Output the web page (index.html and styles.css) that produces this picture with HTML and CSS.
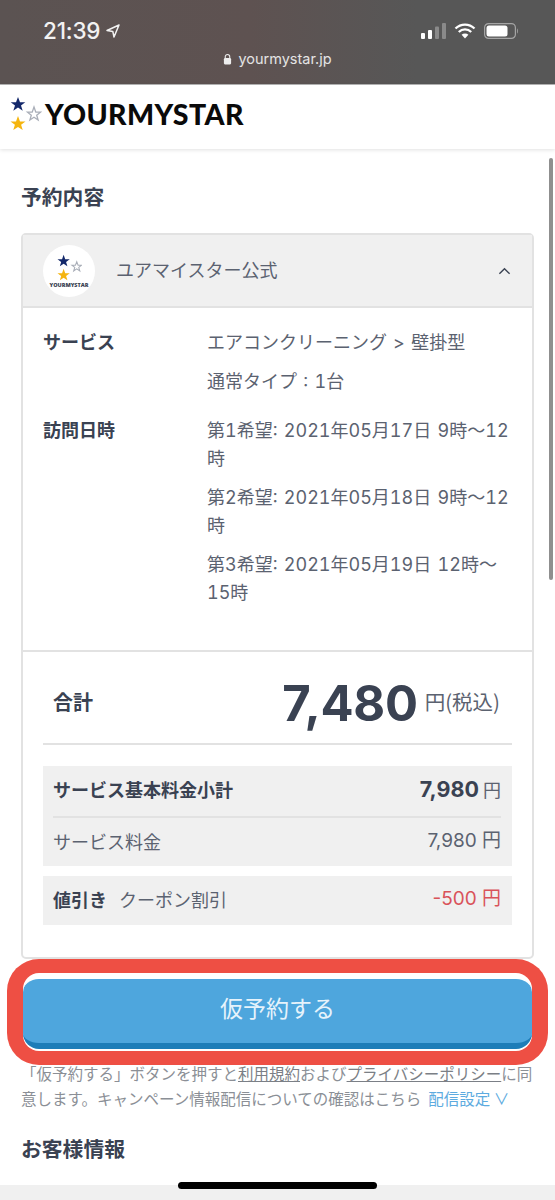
FILE: index.html
```html
<!DOCTYPE html>
<html lang="ja">
<head>
<meta charset="utf-8">
<title>YOURMYSTAR</title>
<link rel="stylesheet" href="styles.css">
</head>
<body>
<div class="phone">
  <header class="chrome">
    <div class="status">
      <div class="clock"><span>21:39</span>
        <svg class="loc" viewBox="0 0 14 14"><path d="M13 1 1 6.500l5.800.9L8 13z" fill="none" stroke="#f2f2f2" stroke-width="1.500" stroke-linejoin="round"/></svg>
      </div>
      <div class="indicators">
        <svg class="signal" viewBox="0 0 25 16"><rect x="0" y="10" width="4" height="6" rx="1" fill="#fff"/><rect x="7" y="7" width="4" height="9" rx="1" fill="#fff"/><rect x="14" y="3.500" width="4" height="12.500" rx="1" fill="#8a8a8a"/><rect x="21" y="0" width="4" height="16" rx="1" fill="#8a8a8a"/></svg>
        <svg class="wifi" viewBox="0 0 22 16"><path d="M1.500 5.500a13.500 13.500 0 0 1 19 0M4.800 9a8.800 8.800 0 0 1 12.400 0" fill="none" stroke="#fff" stroke-width="2.300"/><path d="M7.600 11.800a4.800 4.800 0 0 1 6.800 0L11 15.500z" fill="#fff"/></svg>
        <svg class="battery" viewBox="0 0 35 16"><rect x=".6" y=".6" width="30.800" height="14.800" rx="4" fill="none" stroke="#a5a5a5" stroke-width="1.200"/><rect x="2.500" y="2.500" width="21" height="11" rx="2.500" fill="#fff"/><path d="M33 5.500c1.200.4 1.200 4.600 0 5z" fill="#a5a5a5"/></svg>
      </div>
    </div>
    <div class="address">
      <svg class="lock" viewBox="0 0 10 12"><path d="M2.500 5V3.500a2.500 2.500 0 0 1 5 0V5" fill="none" stroke="#eee" stroke-width="1.200"/><rect x="1" y="5" width="8" height="7" rx="1.200" fill="#eee"/></svg>
      <span>yourmystar.jp</span>
    </div>
  </header>

  <nav class="brandbar">
    <svg class="stars" viewBox="0 0 32 36">
      <polygon points="8,1 10,6.200 15.300,6.200 11,9.500 12.700,14.800 8,11.500 3.300,14.800 5,9.500 .7,6.200 6,6.200" fill="#14296b"/>
      <polygon points="24,11 25.800,16.200 30.500,16.200 26.700,19.300 28.100,24 24,21.200 19.900,24 21.300,19.300 17.500,16.200 22.200,16.200" fill="none" stroke="#a9aeb8" stroke-width="1.300"/>
      <polygon points="8,20 10,25.500 15.500,25.500 11.100,28.800 12.700,34 8,30.900 3.300,34 4.900,28.800 .5,25.500 6,25.500" fill="#f5b50f"/>
    </svg>
    <span class="wordmark">YOURMYSTAR</span>
  </nav>

  <main class="content">
    <div class="scrollthumb"></div>
    <h2 class="section-title">予約内容</h2>

    <section class="card">
      <div class="card-head">
        <div class="avatar">
          <svg class="avatar-stars" viewBox="0 0 32 32">
            <polygon points="11,2 12.800,7 18,7 13.800,10.200 15.300,15.200 11,12.200 6.700,15.200 8.200,10.200 4,7 9.200,7" fill="#14296b"/>
            <polygon points="26,10 27.500,14 31.500,14 28.300,16.500 29.500,20.500 26,18.100 22.500,20.500 23.700,16.500 20.500,14 24.500,14" fill="none" stroke="#a9aeb8" stroke-width="1.200"/>
            <polygon points="11,18 12.800,23 18,23 13.800,26.200 15.300,31.200 11,28.200 6.700,31.200 8.200,26.200 4,23 9.200,23" fill="#f5b50f"/>
          </svg>
          <span class="avatar-name">YOURMYSTAR</span>
        </div>
        <span class="shop-name">ユアマイスター公式</span>
        <svg class="chevron" viewBox="0 0 14 8"><path d="M1.500 7 7 1.500 12.500 7" fill="none" stroke="#3a4252" stroke-width="1.500"/></svg>
      </div>

      <div class="details">
        <div class="detail-row">
          <div class="detail-label">サービス</div>
          <div class="detail-value">
            <p>エアコンクリーニング &gt; 壁掛型</p>
            <p>通常タイプ : 1台</p>
          </div>
        </div>
        <div class="detail-row">
          <div class="detail-label">訪問日時</div>
          <div class="detail-value">
            <p>第1希望: 2021年05月17日 9時〜12時</p>
            <p>第2希望: 2021年05月18日 9時〜12時</p>
            <p>第3希望: 2021年05月19日 12時〜15時</p>
          </div>
        </div>
      </div>

      <div class="pricing">
        <div class="total">
          <span class="total-label">合計</span>
          <span class="total-value"><b>7,480</b><span>円(税込)</span></span>
        </div>
        <div class="price-box">
          <div class="price-row strong"><span>サービス基本料金小計</span><span><b>7,980</b> <i>円</i></span></div>
          <div class="price-row"><span>サービス料金</span><span class="amount">7,980 円</span></div>
        </div>
        <div class="price-box discount">
          <div class="price-row"><span><b>値引き</b><span class="coupon">クーポン割引</span></span><span class="amount minus">-500 円</span></div>
        </div>
      </div>
    </section>

    <div class="cta-ring">
      <button class="cta">仮予約する</button>
    </div>

    <p class="notice">「仮予約する」ボタンを押すと<u>利用規約</u>および<u>プライバシーポリシー</u>に同意します。キャンペーン情報配信についての確認はこちら<a class="delivery">配信設定 ∨</a></p>

    <h2 class="section-title customer">お客様情報</h2>
  </main>

  <footer class="home-area"><div class="home-bar"></div></footer>
</div>
</body>
</html>
```
FILE: styles.css
```css
* { box-sizing: border-box; }
html, body { margin: 0; padding: 0; }
body {
  width: 555px;
  height: 1200px;
  overflow: hidden;
  background: #fff;
  color: #3a4252;
  font-family: "Noto Sans CJK JP", "Noto Sans", sans-serif;
}
.phone { display: flex; flex-direction: column; height: 1200px; position: relative; }

.chrome {
  height: 85px;
  flex: none;
  background: linear-gradient(90deg, #5b5352 0%, #5e5251 45%, #575757 75%, #575757 100%);
  border-bottom: 1px solid #b5b5b5;
  color: #f2f2f2;
}
.status { display: flex; justify-content: space-between; align-items: center; height: 32px; margin-top: 15px; padding: 0 36px 0 43px; }
.clock { display: flex; align-items: center; gap: 6px; font: 500 22.500px/32px Inter, "Liberation Sans", sans-serif; letter-spacing: -.2px; }
.loc { width: 14px; height: 14px; }
.indicators { display: flex; align-items: center; gap: 8px; }
.signal { width: 25px; height: 16px; }
.wifi { width: 22px; height: 16px; }
.battery { width: 35px; height: 16px; }
.address { display: flex; justify-content: center; align-items: center; gap: 6px; margin-top: 2px; font: 400 14.500px/20px Inter, "Liberation Sans", sans-serif; color: #e4e4e4; }
.lock { width: 9px; height: 12px; }

.brandbar {
  height: 64px;
  flex: none;
  display: flex;
  align-items: center;
  gap: 1px;
  padding: 0 0 6px 10px;
  background: #fff;
  box-shadow: 0 1px 4px rgba(0,0,0,.12);
  position: relative;
  z-index: 1;
}
.stars { width: 32px; height: 36px; }
.wordmark { font: 900 28.500px/32px Lato, "Open Sans", sans-serif; color: #0a0a0a; letter-spacing: .4px; margin-left: 2px; }

.content { flex: 1; padding: 0 21px; position: relative; min-height: 0; }
.scrollthumb { position: absolute; right: 2px; top: 9px; width: 4px; height: 422px; border-radius: 2px; background: #8f8f8f; }
.section-title { margin: 0; font-size: 20.800px; line-height: 30px; font-weight: 700; color: #3a4252; }
.content > .section-title:first-of-type { margin-top: 32px; }

.card { margin-top: 22px; width: 513px; border: 2px solid #e2e2e2; border-radius: 5px; background: #fff; height: 726px; }
.card-head { height: 73px; display: flex; align-items: center; background: #f0f0f0; border-bottom: 2px solid #e2e2e2; padding: 0 20px; }
.avatar { width: 52px; height: 52px; border-radius: 50%; background: #fff; display: flex; flex-direction: column; align-items: center; justify-content: center; flex: none; }
.avatar-stars { width: 28px; height: 28px; margin-left: -2px; }
.avatar-name { font: 800 5.500px/7px "Open Sans", sans-serif; color: #3a4252; margin-top: 1px; }
.shop-name { margin-left: 21px; flex: 1; font-size: 18px; line-height: 24px; margin-top: -4px; color: #5b6270; }
.chevron { width: 13px; height: 8px; margin-right: 1px; }

.details { padding: 21px 19px 0 20px; height: 344px; border-bottom: 2px solid #e2e2e2; }
.detail-row { display: flex; }
.detail-row + .detail-row { margin-top: 10px; }
.detail-label { width: 164px; flex: none; font-size: 18px; line-height: 28px; font-weight: 700; color: #3a4252; margin-top: -2px; }
.detail-value { flex: 1; min-width: 0; font-family: Inter, "Noto Sans CJK JP", sans-serif; font-variant-numeric: tabular-nums; word-spacing: 1.500px; font-size: 18px; line-height: 28px; color: #5b6270; }
.detail-value p { margin: 0 0 11px; }

.pricing { padding: 0 20px; }
.total { height: 93px; display: flex; justify-content: space-between; align-items: center; border-bottom: 2px solid #e2e2e2; padding: 7px 12px 0 10px; }
.total-label { font-size: 20px; font-weight: 700; line-height: 28px; margin-top: 2px; }
.total-value { display: flex; align-items: center; }
.total-value b { font: 700 49px/60px Inter, "Liberation Sans", sans-serif; color: #3a4252; letter-spacing: -.3px; margin-top: 5px; }
.total-value span { font-size: 20.500px; margin-left: 7px; color: #5b6270; }

.price-box { background: #f0f0f0; padding: 0 11px 0 10px; margin-top: 21px; }
.price-row { height: 50px; display: flex; justify-content: space-between; align-items: center; font-size: 18px; line-height: 26px; color: #5b6270; padding-bottom: 4px; }
.price-row + .price-row { border-top: 2px solid #e2e2e2; padding-bottom: 3px; }
.price-row b { color: #3a4252; }
.price-row i { font-style: normal; font-weight: 400; color: #5b6270; }
.price-row.strong { font-weight: 700; color: #3a4252; }
.price-row.strong > span:last-child { font-weight: 400; }
.price-row.strong > span:last-child b { font: 700 21.500px Inter, "Liberation Sans", sans-serif; }
.price-row span { white-space: nowrap; }
.amount { font-family: Inter, "Liberation Sans", "Noto Sans CJK JP", sans-serif; font-size: 19px; }
.discount { margin-top: 10px; }
.discount .price-row { height: 49px; }
.coupon { margin-left: 12px; }
.minus { color: #d9535a; }

.cta-ring {
  margin: 0 0 0 -14px;
  width: 541px;
  height: 106px;
  background: #ee4f44;
  border-radius: 32px;
  padding: 17px 16px 16px;
}
.cta {
  display: block;
  width: 100%;
  height: 73px;
  padding: 0 0 8px;
  border: 0;
  border-top: 3px solid #fff;
  border-bottom: 6px solid #1d7db8;
  border-radius: 16px;
  background: #4ea6dd;
  color: #e6f3fb;
  font: 400 23px/1 "Noto Sans CJK JP", sans-serif;
  box-shadow: 0 -3px 0 #fff, 0 2px 0 #fff;
}

.notice { margin: -4px 0 0; position: relative; width: 513px; font-size: 15.500px; line-height: 25px; color: #8b8f96; }
.notice u { color: #7b7f86; }
.delivery { color: #5dabe0; margin-left: 7px; }
.section-title.customer { margin-top: 22px; }

.home-area { position: absolute; left: 0; right: 0; top: 1185px; height: 15px; background: #f0f0f0; }
.home-bar { position: absolute; left: 178px; top: -3px; width: 199px; height: 7px; border-radius: 4px; background: #000; }
```
